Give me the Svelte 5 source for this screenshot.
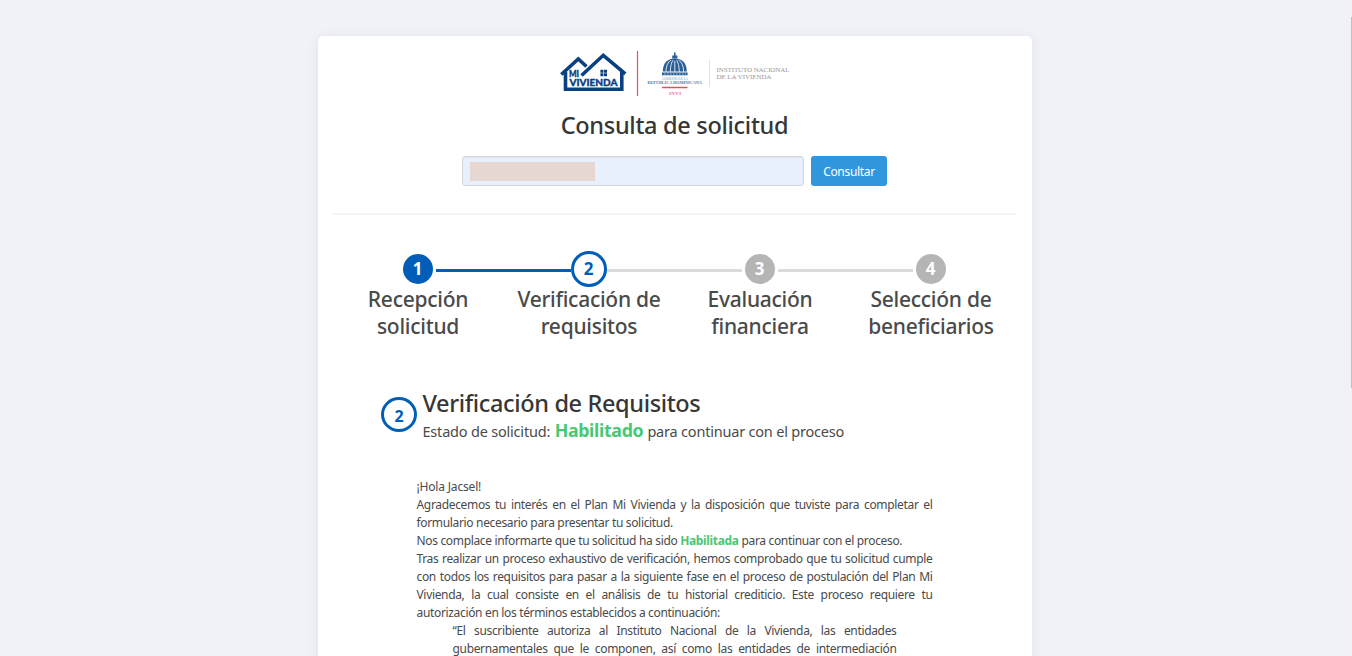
<script>
  const steps = [
    { n: 1, top: 'Recepción', bottom: 'solicitud', state: 'done' },
    { n: 2, top: 'Verificación de', bottom: 'requisitos', state: 'active' },
    { n: 3, top: 'Evaluación', bottom: 'financiera', state: 'todo' },
    { n: 4, top: 'Selección de', bottom: 'beneficiarios', state: 'todo' }
  ];
  let query = $state('');
</script>

<div class="page">
  <main class="card">
    <header class="logo">
      <svg width="230" height="46" viewBox="560 51 230 46" role="img" aria-label="Mi Vivienda · INVI">
        <g fill="none" stroke="#0b4080" stroke-width="3.6">
          <path d="M565.5 72V89.3H621.8V71" />
          <path d="M561.3 74.5L578.3 59L586.5 66.5M581.5 75.5L603.3 55.3L625.3 73.8" />
        </g>
        <path d="M600.4 69.8h3v2.9h-3zM604 69.8h3v2.9h-3zM600.4 73.3h3v2.9h-3zM604 73.3h3v2.9h-3z" fill="#0b4080" />
        <g fill="#0b4080" stroke="#0b4080" stroke-width=".35" font-family="Lato, sans-serif" font-weight="900">
          <text x="569" y="76.8" font-size="8.8" textLength="10" lengthAdjust="spacingAndGlyphs">MI</text>
          <text x="569.5" y="86" font-size="9.5" textLength="48" lengthAdjust="spacingAndGlyphs">VIVIENDA</text>
        </g>
        <path d="M637.5 51V96" stroke="#e0545c" stroke-width="1.2" />
        <g fill="#2c5f97">
          <path d="M674 52.5h1.6v3h1.8v3h-5.2v-3h1.8z" />
          <path d="M662.8 71.5C663 62.5 668 58.6 674.8 58.6S686.6 62.5 686.8 71.5z" />
          <path d="M662 72.5h25.6v2.8H662z" />
        </g>
        <path d="M666 72C666 66 668 62 671 60M670.3 72C670.5 66 671.5 62 673.2 60M679.3 72C679.1 66 678.1 62 676.4 60M683.6 72C683.6 66 681.6 62 678.6 60M674.8 72V61" stroke="#dce6f0" stroke-width="1" fill="none" />
        <path d="M664 74h22" stroke="#b9cade" stroke-width="1" stroke-dasharray="1.5 1.5" />
        <g font-family="Liberation Serif, serif">
          <text x="662" y="79.8" font-size="3.4" fill="#8ca7c4" textLength="26">GOBIERNO DE LA</text>
          <text x="647.5" y="83.8" font-size="4.4" font-weight="700" fill="#5c80aa" textLength="54.5">REPÚBLICA DOMINICANA</text>
          <text x="669" y="94.9" font-size="4.8" font-weight="700" fill="#ec6c76" textLength="12">INVI</text>
          <text x="716.5" y="71.8" font-size="7" fill="#999" textLength="73">INSTITUTO NACIONAL</text>
          <text x="716.5" y="78.8" font-size="7" fill="#999" textLength="55">DE LA VIVIENDA</text>
        </g>
        <path d="M662 87.5h25.5" stroke="#ed4c58" stroke-width="1.5" />
        <path d="M709.5 60V87" stroke="#e3e3e3" />
      </svg>
    </header>

    <h1>Consulta de solicitud</h1>

    <form class="search" onsubmit={(e) => e.preventDefault()}>
      <div class="field">
        <span class="mask"></span>
        <input bind:value={query} />
      </div>
      <button>Consultar</button>
    </form>

    <hr />

    <ol class="steps">
      {#each steps as s, i}
        <li class={s.state}>
          <div class="rail">
            <i class="line" class:blue={i === 1} class:none={i === 0}></i>
            <b class="dot">{s.n}</b>
            <i class="line" class:blue={i === 0} class:none={i === 3}></i>
          </div>
          <span class="label">{s.top}<br />{s.bottom}</span>
        </li>
      {/each}
    </ol>

    <section class="status">
      <b class="badge">2</b>
      <div>
        <h2>Verificación de Requisitos</h2>
        <p class="state">Estado de solicitud: <strong>Habilitado</strong> para continuar con el proceso</p>
      </div>
    </section>

    <article class="letter">
      <p class="hello">¡Hola Jacsel!</p>
      <p class="full">Agradecemos tu interés en el Plan Mi Vivienda y la disposición que tuviste para completar el</p>
      <p>formulario necesario para presentar tu solicitud.</p>
      <p>Nos complace informarte que tu solicitud ha sido <strong>Habilitada</strong> para continuar con el proceso.</p>
      <p class="full">Tras realizar un proceso exhaustivo de verificación, hemos comprobado que tu solicitud cumple</p>
      <p class="full">con todos los requisitos para pasar a la siguiente fase en el proceso de postulación del Plan Mi</p>
      <p class="full">Vivienda, la cual consiste en el análisis de tu historial crediticio. Este proceso requiere tu</p>
      <p>autorización en los términos establecidos a continuación:</p>
      <blockquote>
        <p class="full">“El suscribiente autoriza al Instituto Nacional de la Vivienda, las entidades</p>
        <p class="full">gubernamentales que le componen, así como las entidades de intermediación</p>
      </blockquote>
    </article>
  </main>
  <div class="scrollbar"><i></i></div>
</div>

<style>
  :global(body) { margin: 0; overflow: hidden; background: #f0f2f7; }
  * { box-sizing: border-box; }
  .page {
    position: relative; height: 656px; overflow: hidden; padding-top: 36px;
    background: #f0f2f7; color: #4a4a4a; font-family: "Noto Sans", "Open Sans", sans-serif;
  }
  .card {
    width: 714px; height: 700px; margin-left: 318px; padding: 15px 15px 0;
    background: #fff; border-radius: 5px; box-shadow: 0 2px 12px rgba(60, 70, 100, .09);
  }
  .logo { display: flex; height: 46px; padding-left: 227px; }
  .logo svg { flex: none; }
  h1, h2, p, ol, blockquote { margin: 0; padding: 0; }
  h1 {
    margin-top: 13px; height: 30px; padding-right: 1px; line-height: 30px; text-align: center; white-space: nowrap;
    font-size: 23.5px; font-weight: 500; letter-spacing: -.3px; color: #363636;
  }
  .search { display: flex; gap: 7px; margin: 16px 0 0 129px; height: 30px; }
  .field {
    width: 342px; display: flex; align-items: center; padding-left: 7px;
    background: #e8f0fe; border: 1px solid #d5d7dd; border-radius: 3px;
    box-shadow: inset 0 1px 1px rgba(0, 0, 0, .05);
  }
  .mask { width: 125px; height: 19px; background: #e6d7d3; }
  input { flex: 1; min-width: 0; border: 0; outline: 0; background: none; font: inherit; font-size: 12px; }
  button {
    width: 76px; padding: 0; border: 0; border-radius: 3px; background: #3197dd; color: #fff;
    font: 12px "Noto Sans", sans-serif; letter-spacing: -.32px;
  }
  hr { height: 2px; margin: 27px 0 0; border: 0; background: #f5f5f5; }
  .steps { display: grid; grid-template-columns: repeat(4, 171px); margin: 36px 0 0 -1px; list-style: none; }
  .rail { display: flex; align-items: center; height: 36px; gap: 3px; }
  .active .rail { gap: 0; }
  .line { flex: 1; height: 3px; margin-top: 3px; background: #dadcdc; }
  .line.blue { background: #005eb8; }
  .line.none { background: none; }
  .dot {
    flex: none; width: 30px; height: 30px; border-radius: 50%; background: #b5b5b5; color: #fff;
    font-size: 17px; line-height: 30px; text-align: center;
  }
  .done .dot { background: #005eb8; }
  .active .dot { width: 36px; height: 36px; background: #fff; color: #005eb8; border: 3px solid #005eb8; }
  .label {
    display: block; margin-top: -1px; padding-left: 1px; text-align: center; white-space: nowrap;
    font-size: 21px; font-weight: 500; line-height: 27px; letter-spacing: -.27px; color: #4a4a4a;
  }
  .status { display: flex; gap: 5.5px; margin: 48px 0 0 48px; height: 60px; }
  .badge {
    width: 36px; height: 35px; margin-top: 9px; border: 3px solid #005eb8; border-radius: 50%;
    color: #005eb8; font-size: 16px; line-height: 32px; text-align: center;
  }
  h2 {
    font-size: 23.5px; font-weight: 500; line-height: 30px; letter-spacing: -.36px; color: #363636; white-space: nowrap;
  }
  .state { line-height: 24px; font-size: 14.5px; letter-spacing: -.2px; white-space: nowrap; }
  .state strong { font-size: 17.8px; letter-spacing: -.35px; margin: 0 .5px 0 1px; }
  strong { color: #48c774; font-weight: 700; }
  .letter {
    width: 516px; margin: 30px 0 0 83.5px; font-size: 12px; line-height: 18px; letter-spacing: -.335px;
  }
  .letter p { height: 18px; white-space: nowrap; }
  .letter .hello { letter-spacing: -.18px; }
  .letter p.full { white-space: normal; text-align-last: justify; }
  blockquote { margin: 0 36px; }
  .scrollbar {
    position: absolute; top: 0; right: 0; width: 2px; height: 656px; padding: 17px 0 0 1px; background: #f1f1f1;
  }
  .scrollbar i { display: block; height: 371px; background: #c1c1c1; }
</style>
